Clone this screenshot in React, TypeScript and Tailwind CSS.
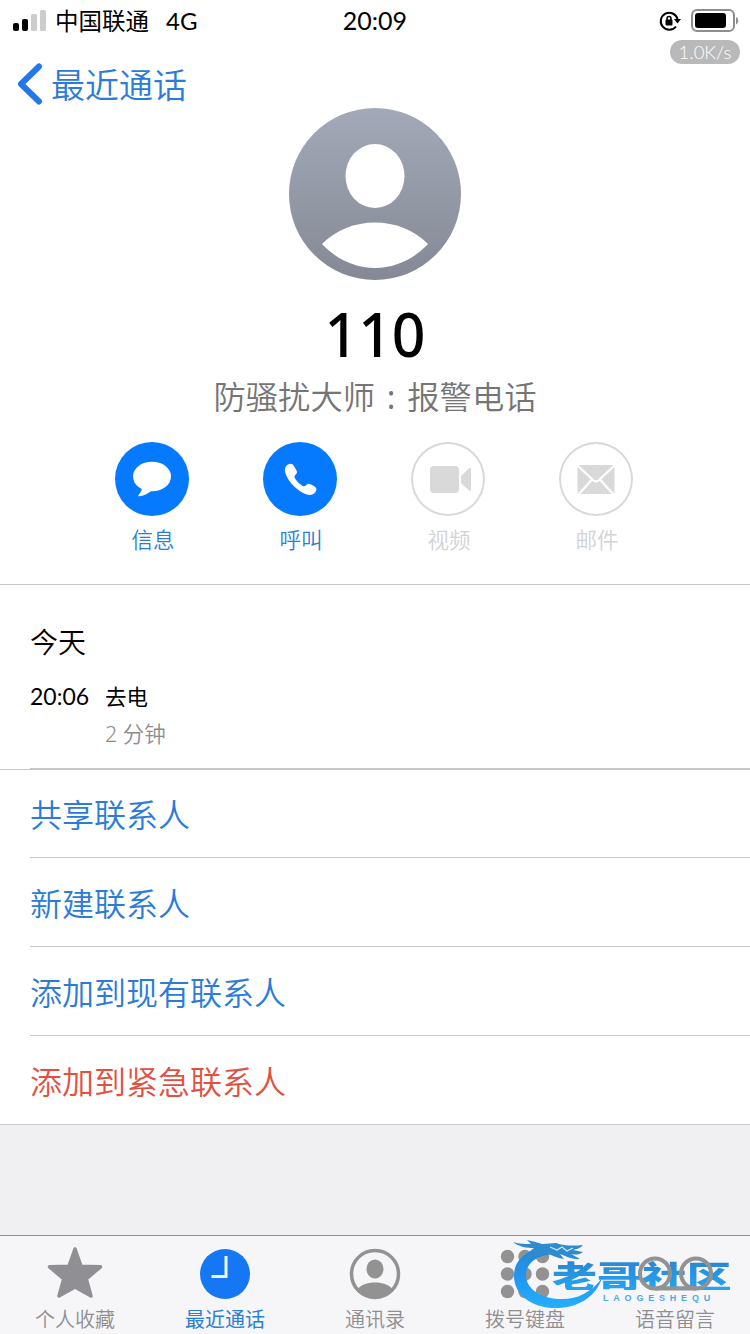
import React from "react";

const cjk = "font-['Noto_Sans','Noto_Sans_CJK_SC',sans-serif]";

const actions = [
  {
    label: "信息",
    active: true,
    icon: (
      <svg viewBox="0 0 74 74" className="size-full" fill="#fff">
        <ellipse cx="37" cy="34.500" rx="19" ry="14.800" />
        <path d="M27 44c0 5-1.500 6.500-3.500 9-.5.800 0 1.500 1 1.300 5-.8 8.500-2.800 12.500-5.800z" />
      </svg>
    ),
  },
  {
    label: "呼叫",
    active: true,
    icon: (
      <svg viewBox="0 0 74 74" className="size-full" fill="#fff">
        <path d="M25 22.500c2.300-1.500 4.500-.9 5.800 1.200l2.500 4.200c1.100 2 .8 3.400-.8 4.900-1.300 1.200-1.300 2.300-.3 3.900 2.200 3.300 4.600 5.500 7.600 7.200 1.400.8 2.300.5 3.400-.8 1.300-1.600 2.800-1.800 4.600-.8l3.800 2.300c2.200 1.400 2.400 3.500.7 5.600-2.800 3.500-7.300 3.600-13.400.1C32 46.200 25.600 39.500 22.900 32.500c-1.800-4.600-1.100-8.200 2.100-10z" />
      </svg>
    ),
  },
  {
    label: "视频",
    active: false,
    icon: (
      <svg viewBox="0 0 74 74" className="size-full" fill="#d9d9d9">
        <rect x="19" y="24" width="29" height="27" rx="4" />
        <path d="M50 34l8-7.500c1-.8 2-.4 2 .8v20.500c0 1.200-1 1.600-2 .8l-8-7.500z" />
      </svg>
    ),
  },
  {
    label: "邮件",
    active: false,
    icon: (
      <svg viewBox="0 0 74 74" className="size-full">
        <rect x="18.500" y="23" width="37" height="29" rx="1" fill="#d9d9d9" />
        <path d="M18 23l16.500 15.500q2.500 2 5 0L56 23M19 53l14-15.500M55 53L41 37.500" fill="none" stroke="#fff" strokeWidth="2.200" />
      </svg>
    ),
  },
];

const links = [
  { label: "共享联系人", color: "text-[#2b7bd9]" },
  { label: "新建联系人", color: "text-[#2b7bd9]" },
  { label: "添加到现有联系人", color: "text-[#2b7bd9]" },
  { label: "添加到紧急联系人", color: "text-[#e2503f]" },
];

const tabs = [
  {
    label: "个人收藏",
    active: false,
    icon: (
      <svg viewBox="0 0 60 56" className="h-14 w-[60px]">
        <path d="M30 5l6 17.200 19.500.6L41.300 35 46 52 30 43 14 52l4.700-17L4.500 22.800l19.500-.6z" fill="#8f8f94" stroke="#8f8f94" strokeWidth="3.500" strokeLinejoin="round" />
      </svg>
    ),
  },
  {
    label: "最近通话",
    active: true,
    icon: (
      <svg viewBox="0 0 60 56" className="h-14 w-[60px]">
        <circle cx="30" cy="30" r="25" fill="#1677f5" />
        <path d="M31 12v20.500H16.500" fill="none" stroke="#e9f7ff" strokeWidth="3" />
      </svg>
    ),
  },
  {
    label: "通讯录",
    active: false,
    icon: (
      <svg viewBox="0 0 60 56" className="h-14 w-[60px]" fill="#929292">
        <circle cx="30" cy="30" r="23.500" fill="none" stroke="#929292" strokeWidth="3.500" />
        <ellipse cx="30" cy="25" rx="8.500" ry="9.500" />
        <path d="M12 45.500c4-4.500 10-7 18-7s14 2.500 18 7a25 25 0 0 1-36 0z" />
      </svg>
    ),
  },
  {
    label: "拨号键盘",
    active: false,
    icon: (
      <svg viewBox="0 0 60 56" className="h-14 w-[60px]" fill="#929292">
        {[12.500, 30, 47.500].map((y) =>
          [12.500, 30, 47.500].map((x) => <circle key={`${x}-${y}`} cx={x} cy={y} r="6.700" />)
        )}
      </svg>
    ),
  },
  {
    label: "语音留言",
    active: false,
    icon: (
      <svg viewBox="0 0 80 56" className="relative z-10 h-14 w-20" fill="none" stroke="#929292" strokeWidth="4">
        <circle cx="20" cy="29.500" r="15" />
        <circle cx="61" cy="29.500" r="15" />
        <path d="M20 44.500h41" />
      </svg>
    ),
  },
];

function StatusBar() {
  return (
    <div className="relative grid h-[42px] shrink-0 grid-cols-3 items-center text-black">
      <div className="flex items-center pl-[13px] whitespace-nowrap">
        <svg viewBox="0 0 34 22" className="mr-2 h-[22px] w-[34px]">
          <rect x="0" y="13" width="6" height="8" rx="2" />
          <rect x="9" y="9" width="6" height="12" rx="2" />
          <rect x="18" y="4" width="6" height="17" rx="1.500" fill="#ccc" />
          <rect x="27" y="0" width="6" height="21" rx="1.500" fill="#ccc" />
        </svg>
        <span className="pt-0.5 text-[23.500px]">中国联通</span>
        <span className="ml-[17px] font-['Lato'] text-2xl">4G</span>
      </div>
      <div className="text-center font-['Lato'] text-[25px]">20:09</div>
      <div className="flex items-center justify-end pr-[11px]">
        <svg viewBox="0 0 22 22" className="mr-2.5 size-[22px]">
          <path d="M17 16.500A8.500 8.500 0 1 1 18.500 9" fill="none" stroke="#000" strokeWidth="2" />
          <path d="M15 9h7l-3.500 4.500z" />
          <rect x="6.500" y="9.500" width="7" height="6" rx="1" />
          <path d="M8 10V8.500a2 2 0 0 1 4 0V10" fill="none" stroke="#000" strokeWidth="1.500" />
        </svg>
        <svg viewBox="0 0 48 24" className="h-6 w-12">
          <rect x="1" y="1" width="42" height="21" rx="5" fill="none" stroke="#8e8e8e" strokeWidth="2" />
          <rect x="4" y="4" width="31" height="15" rx="3" />
          <path d="M45 8c3 1.500 3 6 0 7.500z" fill="#8e8e8e" />
        </svg>
      </div>
      <div className="absolute top-10 right-2.5 flex h-6 w-[70px] items-center justify-center rounded-full bg-[#b9b9b9] pt-0.5 font-['Lato'] text-[18.500px] font-light text-white">
        1.0K/s
      </div>
    </div>
  );
}

function Watermark() {
  return (
    <div className="absolute bottom-4 left-[510px] h-[78px] w-[230px]">
      <svg viewBox="0 0 230 78" className="size-full">
        <defs>
          <linearGradient id="wave" x1="0" y1="0" x2="0" y2="1">
            <stop offset="0" stopColor="#2b86cc" />
            <stop offset="0.500" stopColor="#2196f3" />
            <stop offset="1" stopColor="#25b0fa" />
          </linearGradient>
        </defs>
        {/* body and tail */}
        <path
          d="M54 7C26 3 4 15 4 36c0 20 20 33 44 32 22-1 38-12 44-30-11 15-26 22-43 21C29 58 16 48 16 35c0-12 11-20 28-21z"
          fill="url(#wave)"
        />
        {/* horns and mane */}
        <path
          d="M3 2c7 2 12 2 18 2l-4-4c6 1 11 3 15 4 6 0 10-1 14-1 8 3 18 3 27 2-3 4-7 4-10 5l10 2c-4 3-8 3-12 2l9 5c-8 1-14-3-20-5l4 5c-7-1-12-4-18-6-6 2-12 4-16 7l5-8-7 1 6-5C17 8 9 7 3 2z"
          fill="#2f8bd0"
        />
        <path d="M40 7l7 3 5-3 5 4 6-3" fill="none" stroke="#cfe9fb" strokeWidth="1.200" />
      </svg>
      <div className="absolute top-5 left-[42px] origin-left scale-x-[1.450] bg-linear-to-b from-[#2b86d0] to-[#22a5f5] bg-clip-text font-['Noto_Sans_CJK_SC'] text-[31px] leading-[30px] font-black whitespace-nowrap text-transparent">
        老哥社区
      </div>
      <div className="absolute top-[53px] left-[93px] font-['Liberation_Sans'] text-[9px] leading-[10px] font-bold tracking-[4.800px] text-[#4fa9e6]">
        LAOGESHEQU
      </div>
    </div>
  );
}

export default function App() {
  return (
    <div className={`relative flex h-[1334px] w-[750px] flex-col overflow-hidden bg-[#f0f0f3] ${cjk}`}>
      <header className="flex h-[585px] shrink-0 flex-col border-b border-[#c8c8cb] bg-white">
        <StatusBar />
        <div className="flex h-[66px] shrink-0 items-start pt-5 pl-[17px]">
          <svg viewBox="0 0 26 44" className="h-11 w-[26px]">
            <path d="M22 4.500L4 22l18 17.500" fill="none" stroke="#2377e8" strokeWidth="6" strokeLinecap="round" strokeLinejoin="round" />
          </svg>
          <span className="ml-2 pt-px text-[34px] leading-[44px] font-[350] text-[#2b7bd9]">最近通话</span>
        </div>

        <svg viewBox="0 0 172 172" className="size-[172px] shrink-0 self-center">
          <defs>
            <linearGradient id="avatar" x1="0" y1="0" x2="0" y2="1">
              <stop offset="0" stopColor="#a3a9b8" />
              <stop offset="1" stopColor="#858995" />
            </linearGradient>
          </defs>
          <circle cx="86" cy="86" r="86" fill="url(#avatar)" />
          <ellipse cx="86" cy="68" rx="29.500" ry="32" fill="#fff" />
          <path d="M33 136c14-14 33-21.500 53-21.500s39 7.500 53 21.500c-14 15-33 24-53 24s-39-9-53-24z" fill="#fff" />
        </svg>

        <h1 className="mt-[22px] scale-x-[0.950] text-center text-[62px] leading-[62px] font-medium">110</h1>
        <p className="mt-3 h-10 text-center text-[32.300px] leading-[40px] font-[350] text-[#757575]">
          防骚扰大师<span className="inline-block w-[1em] text-center font-normal">:</span>报警电话
        </p>

        <div className="mt-[26px] flex justify-center gap-[74px] pr-0.5">
          {actions.map((a) => (
            <div key={a.label} className="flex w-[74px] flex-col items-center">
              <div className={a.active ? "size-[74px] rounded-full bg-[#067aff]" : "size-[74px] rounded-full shadow-[inset_0_0_0_2px_#d9d9d9]"}>
                {a.icon}
              </div>
              <span className={`mt-2 pl-0.5 text-[21.500px] leading-8 font-[350] ${a.active ? "text-[#2b7fd0]" : "text-[#d2d2d4]"}`}>
                {a.label}
              </span>
            </div>
          ))}
        </div>
      </header>

      <section className="h-[185px] shrink-0 border-b border-[#c8c8cb] bg-white pl-[30px]">
        <div className="flex h-[184px] flex-col border-b border-[#c8c8cb]">
          <h2 className="mt-[37px] text-[28px] leading-[40px] font-[350]">今天</h2>
          <div className="mt-[19px] flex leading-[30px]">
            <span className="w-[75px] font-['Lato'] text-[23px]">20:06</span>
            <span className="pt-px text-[21.500px]">去电</span>
          </div>
          <p className="mt-[7px] pl-[75px] text-[21.500px] leading-[30px] font-[350] text-[#8c8c8c]">2 分钟</p>
        </div>
      </section>

      <ul className="shrink-0 border-b border-[#c8c8cb] bg-white pl-[30px]">
        {links.map((l) => (
          <li key={l.label} className={`flex h-[89px] items-center border-b border-[#c8c8cb] pt-[3px] text-[32px] font-[350] first:h-[88px] last:h-[88px] last:border-b-0 ${l.color}`}>
            {l.label}
          </li>
        ))}
      </ul>

      <nav className="mt-auto grid h-[99px] shrink-0 grid-cols-5 border-t border-[#8e8e93] bg-[#f6f6f8]">
        {tabs.map((t) => (
          <div key={t.label} className="flex flex-col items-center pt-2">
            {t.icon}
            <span className={`mt-[7px] text-[20px] leading-[26px] whitespace-nowrap ${t.active ? "text-[#2b7fd9]" : "font-[350] text-[#8e8e93]"}`}>
              {t.label}
            </span>
          </div>
        ))}
      </nav>
      <Watermark />
    </div>
  );
}
